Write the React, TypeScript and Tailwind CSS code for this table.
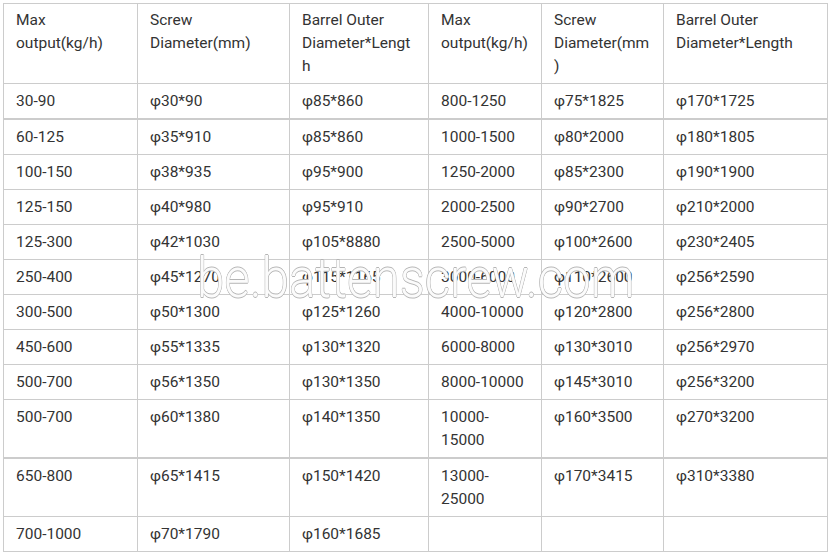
import React from 'react';

const headers = [
  'Max output(kg/h)',
  'Screw Diameter(mm)',
  'Barrel Outer Diameter*Length',
  'Max output(kg/h)',
  'Screw Diameter(mm)',
  'Barrel Outer Diameter*Length',
];

// [cells, thick top border]
const rows: [string[], boolean][] = [
  [['30-90', 'φ30*90', 'φ85*860', '800-1250', 'φ75*1825', 'φ170*1725'], false],
  [['60-125', 'φ35*910', 'φ85*860', '1000-1500', 'φ80*2000', 'φ180*1805'], true],
  [['100-150', 'φ38*935', 'φ95*900', '1250-2000', 'φ85*2300', 'φ190*1900'], false],
  [['125-150', 'φ40*980', 'φ95*910', '2000-2500', 'φ90*2700', 'φ210*2000'], false],
  [['125-300', 'φ42*1030', 'φ105*8880', '2500-5000', 'φ100*2600', 'φ230*2405'], false],
  [['250-400', 'φ45*1270', 'φ115*1165', '3000-6000', 'φ110*2600', 'φ256*2590'], false],
  [['300-500', 'φ50*1300', 'φ125*1260', '4000-10000', 'φ120*2800', 'φ256*2800'], false],
  [['450-600', 'φ55*1335', 'φ130*1320', '6000-8000', 'φ130*3010', 'φ256*2970'], false],
  [['500-700', 'φ56*1350', 'φ130*1350', '8000-10000', 'φ145*3010', 'φ256*3200'], false],
  [['500-700', 'φ60*1380', 'φ140*1350', '10000-15000', 'φ160*3500', 'φ270*3200'], false],
  [['650-800', 'φ65*1415', 'φ150*1420', '13000-25000', 'φ170*3415', 'φ310*3380'], true],
  [['700-1000', 'φ70*1790', 'φ160*1685', '', '', ''], false],
];

const colWidths = ['w-[134px]', 'w-[152px]', 'w-[139px]', 'w-[113px]', 'w-[122px]', 'w-[164px]'];

export default function App() {
  return (
    <div className="relative min-h-[556px] bg-white pt-[3px] pl-[3px] font-['Roboto',sans-serif] text-[15.5px] text-[#333]">
      <table className="w-[824px] table-fixed border-collapse">
        <colgroup>
          {colWidths.map((w, i) => (
            <col key={i} className={w} />
          ))}
        </colgroup>
        <thead>
          <tr>
            {headers.map((h, i) => (
              <th
                key={i}
                className="border border-[#cccccc] px-3 py-[5px] text-left align-top font-normal leading-[23px] break-words"
              >
                {h}
              </th>
            ))}
          </tr>
        </thead>
        <tbody>
          {rows.map(([cells, thick], r) => (
            <tr key={r}>
              {cells.map((c, i) => (
                <td
                  key={i}
                  className={`border border-[#cccccc] px-3 py-[5.5px] text-left align-top leading-[23px] break-words ${
                    thick ? 'border-t-2' : ''
                  }`}
                >
                  {c}
                </td>
              ))}
            </tr>
          ))}
        </tbody>
      </table>

      {/* watermark */}
      <div className="pointer-events-none absolute left-[197px] top-[250px] origin-left scale-x-[0.88] whitespace-nowrap font-['Roboto',sans-serif] text-[56px] font-light leading-none text-white/95 [text-shadow:0.6px_0_0_#b5b5b5,-0.6px_0_0_#b5b5b5,0_0.6px_0_#b5b5b5,0_-0.6px_0_#b5b5b5]">
        be.battenscrew.com
      </div>
    </div>
  );
}
